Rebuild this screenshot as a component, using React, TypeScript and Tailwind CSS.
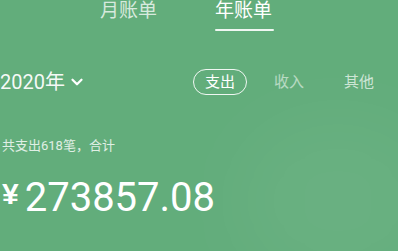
import { ChevronDown } from 'lucide-react'

export default function App() {
  const font = { fontFamily: 'Roboto, "Noto Sans CJK SC", sans-serif' }
  return (
    <div className="w-[398px] h-[251px] overflow-hidden bg-[#62ad7b] text-white relative" style={font}>
      {/* 顶部切换 */}
      <div className="flex h-[36px]">
        <div className="w-[100px]" />
        <div className="w-[115px] text-[19px] leading-[22px] text-white/75">月账单</div>
        <div className="flex flex-col items-start">
          <div className="text-[19px] leading-[22px] text-white">年账单</div>
          <div className="mt-[7px] h-[2px] w-[59px] bg-white/90 rounded-full" />
        </div>
      </div>

      {/* 年份与类型 */}
      <div className="mt-[33px] flex items-center h-[26px]">
        <div className="w-[193px] flex items-center">
          <span className="text-[20px] leading-[22px] text-white/95">2020年</span>
          <ChevronDown className="ml-[3px] w-[18px] h-[18px]" strokeWidth={3} />
        </div>
        <div className="w-[54px] h-[26px] rounded-full border-[1.5px] border-white/90 flex items-center justify-center text-[15px]">
          支出
        </div>
        <div className="ml-[27px] text-[15px] text-white/55">收入</div>
        <div className="ml-[40px] text-[15px] text-white/70">其他</div>
      </div>

      {/* 合计 */}
      <div className="mt-[43px] pl-[2px] text-[13px] leading-[16px] text-white/80">共支出618笔，合计</div>
      <div className="mt-[22px] pl-[2px] flex items-start">
        <span className="mt-[2px] text-[30px] leading-[32px] font-bold" style={{ fontFamily: '"Liberation Sans", sans-serif' }}>¥</span>
        <span className="ml-[6px] text-[40px] leading-[44px]">273857.08</span>
      </div>

      {/* 背景光斑 */}
      <div className="absolute right-[-40px] bottom-[-30px] w-[200px] h-[160px] rounded-full bg-white/5 blur-2xl pointer-events-none" />
    </div>
  )
}
